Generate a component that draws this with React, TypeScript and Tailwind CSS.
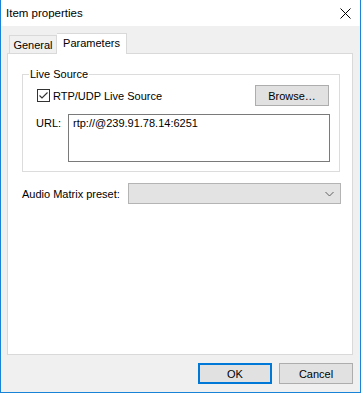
import React from "react";

const font = { fontFamily: '"Segoe UI", "Liberation Sans", Arial, sans-serif' };

function CloseIcon() {
  return (
    <svg width="11" height="11" viewBox="0 0 11 11" className="block">
      <path d="M0.5 0.5 L10.5 10.5 M10.5 0.5 L0.5 10.5" stroke="#000" strokeWidth="1" fill="none" />
    </svg>
  );
}

function CheckBox() {
  return (
    <div className="w-[13px] h-[13px] border border-[#333333] bg-white flex items-center justify-center">
      <svg width="11" height="11" viewBox="0 0 11 11" className="block">
        <path d="M1.5 5.5 L4 8 L9.5 2.5" stroke="#333" strokeWidth="1.1" fill="none" />
      </svg>
    </div>
  );
}

function Chevron() {
  return (
    <svg width="9" height="6" viewBox="0 0 9 6" className="block">
      <path d="M0.5 1 L4.5 5 L8.5 1" stroke="#606060" strokeWidth="1" fill="none" />
    </svg>
  );
}

export default function App() {
  return (
    <div
      className="w-[361px] h-[393px] bg-[#f0f0f0] border-x border-b border-[#1883d7] flex flex-col text-[11px] text-black overflow-hidden whitespace-nowrap"
      style={font}
    >
      {/* Title bar */}
      <div className="h-[26px] bg-white flex items-center pl-[5px] pr-[9px] shrink-0">
        <span className="flex-1 leading-[16px] text-[11.5px]">Item properties</span>
        <CloseIcon />
      </div>

      <div className="ml-[6px] mr-[7px] mt-[7px] flex flex-col">
        {/* Tabs */}
        <div className="h-[20px] flex items-end pl-[2px] relative z-10">
          <div className="w-[48px] h-[18px] border-x border-t border-[#d9d9d9] bg-[#f0f0f0] flex items-center justify-center leading-[14px] pt-[1px]">
            General
          </div>
          <div className="w-[70px] h-[21px] mb-[-1px] border-r border-t border-[#d9d9d9] bg-white flex items-start justify-center pt-[2px] leading-[14px]">
            Parameters
          </div>
        </div>

        {/* Panel */}
        <div className="h-[302px] border border-[#d9d9d9] bg-white flex flex-col">
          <fieldset className="ml-[14px] mr-[12px] mt-[13px] border border-[#dcdcdc] pb-[9px]">
            <legend className="ml-[6px] px-[1px] leading-[14px] h-[14px]">Live Source</legend>
            <div className="mt-[4px] flex items-center h-[21px] pl-[14px] pr-[10px]">
              <CheckBox />
              <span className="ml-[3px] flex-1 leading-[14px]">RTP/UDP Live Source</span>
              <button className="w-[74px] h-[21px] bg-[#e1e1e1] border border-[#adadad] leading-[14px]">
                Browse…
              </button>
            </div>
            <div className="mt-[8px] flex items-start pl-[13px] pr-[9px]">
              <span className="w-[32px] mt-[2px] leading-[15px]">URL:</span>
              <div className="flex-1 h-[48px] border border-[#7a7a7a] pl-[4px] pt-[1px] leading-[15px]">
                rtp://@239.91.78.14:6251
              </div>
            </div>
          </fieldset>

          <div className="mt-[11px] ml-[14px] mr-[11px] flex items-center h-[21px]">
            <span className="w-[106px] leading-[14px]">Audio Matrix preset:</span>
            <div className="flex-1 h-[21px] bg-[#e3e3e3] border border-[#b4b4b4] flex items-center justify-end pr-[6px]">
              <Chevron />
            </div>
          </div>
        </div>

        {/* Buttons */}
        <div className="mt-[8px] flex justify-end gap-[7px]">
          <button className="w-[74px] h-[21px] bg-[#e1e1e1] border-2 border-[#0078d7] leading-[14px]">OK</button>
          <button className="w-[74px] h-[21px] bg-[#e1e1e1] border border-[#adadad] leading-[14px]">Cancel</button>
        </div>
      </div>
    </div>
  );
}
